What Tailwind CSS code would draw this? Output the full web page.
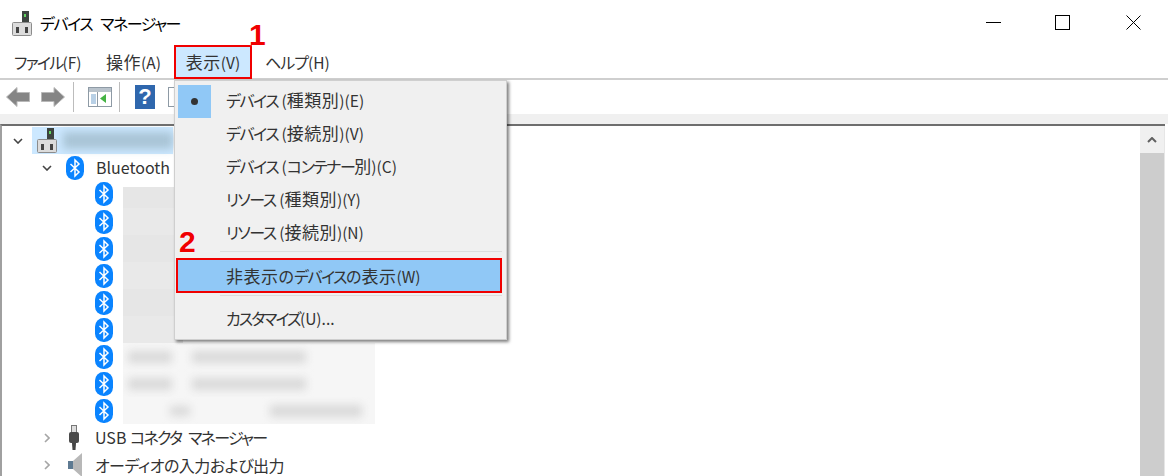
<!DOCTYPE html>
<html lang="ja">
<head>
    <meta charset="UTF-8">
    <title>デバイス マネージャー</title>
    <script src="https://cdn.jsdelivr.net/npm/@tailwindcss/browser@4"></script>
</head>
<body class="bg-white">
    <svg class="hidden">
        <symbol id="bt" viewBox="0 0 18 24">
            <rect width="18" height="24" rx="8.5" fill="#0a84ff"/>
            <path d="M4.5 8 L13 16 L9 20 V4 L13 8 L4.5 16" fill="none" stroke="#fff" stroke-width="1.5"/>
        </symbol>
        <symbol id="pc" viewBox="0 0 20 25">
            <rect x="10" y="0" width="7" height="12" fill="#3d4340"/>
            <rect x="12" y="3" width="2" height="3" fill="#5fd35f"/>
            <rect x="0.5" y="11.5" width="19" height="13" rx="1" fill="#dcdcdc" stroke="#8c8c8c"/>
            <rect x="4" y="16" width="3" height="6" fill="#444"/>
            <rect x="13" y="16" width="3" height="6" fill="#444"/>
        </symbol>
    </svg>

    <div class="relative w-[1168px] h-[476px] overflow-hidden flex flex-col font-['Noto_Sans_CJK_JP',sans-serif] [font-feature-settings:'palt'] text-[#333]">
        <!-- title bar -->
        <div class="h-[46px] flex items-center shrink-0">
            <svg class="w-5 h-[25px] ml-3"><use href="#pc"/></svg>
            <span class="ml-2 text-[16px] text-black tracking-[-1.5px] [word-spacing:6px]">デバイス マネージャー</span>
            <div class="ml-auto flex items-center mr-[27px] mb-[1px]">
                <svg class="w-[15px] h-[15px]" viewBox="0 0 15 15"><path d="M0 7.5H15" stroke="#000" fill="none"/></svg>
                <svg class="w-[15px] h-[15px] ml-[54px]" viewBox="0 0 15 15"><rect x="0.5" y="0.5" width="14" height="14" stroke="#000" fill="none"/></svg>
                <svg class="w-[15px] h-[15px] ml-[56px]" viewBox="0 0 15 15"><path d="M0.5 0.5L14.5 14.5M14.5 0.5L0.5 14.5" stroke="#000" fill="none"/></svg>
            </div>
        </div>

        <!-- menu bar -->
        <div class="h-[34px] shrink-0 flex items-center border-b-2 border-[#cfcfcf] text-[15.5px]">
            <span class="ml-[14px] w-[68px] whitespace-nowrap"><span class="text-[16px] tracking-[-1.75px]">ファイル</span>(F)</span>
            <span class="ml-[24px] w-[55px] whitespace-nowrap"><span class="text-[17px] tracking-[0.5px]">操作</span>(A)</span>
            <span class="ml-[13px] w-[78px] h-[34px] flex items-center justify-center bg-[#cce8ff] border-2 border-[#f00000]"><span><span class="text-[17px] tracking-[0.5px]">表示</span>(V)</span></span>
            <span class="ml-[13px] whitespace-nowrap"><span class="text-[16px] tracking-[-1px]">ヘルプ</span>(H)</span>
        </div>

        <!-- toolbar -->
        <div class="h-[34px] shrink-0 flex items-center">
            <svg class="w-6 h-5 ml-[6px]" viewBox="0 0 24 20"><path d="M0.5 10L11 0.5V5.5H23.5V14.5H11V19.5Z" fill="#858585" stroke="#b8b8b8"/></svg>
            <svg class="w-6 h-5 ml-[11px]" viewBox="0 0 24 20"><path d="M23.5 10L13 0.5V5.5H0.5V14.5H13V19.5Z" fill="#858585" stroke="#b8b8b8"/></svg>
            <div class="w-px h-[30px] bg-[#bcbcbc] ml-2"></div>
            <svg class="w-6 h-5 ml-[14px]" viewBox="0 0 24 20">
                <rect x="0.5" y="0.5" width="23" height="19" fill="#fff" stroke="#8e9aa5"/>
                <rect x="1" y="1" width="22" height="4" fill="#b9c3cc"/>
                <rect x="3" y="7" width="5" height="10" fill="#b8d0e6"/>
                <path d="M9.5 5V19" stroke="#8e9aa5"/>
                <path d="M18 7V16L12 11.5Z" fill="#45b345"/>
            </svg>
            <div class="w-px h-[30px] bg-[#bcbcbc] ml-[7px]"></div>
            <div class="w-5 h-6 ml-[15px] bg-[#2f67ad] text-white text-[22px] leading-6 font-bold text-center font-['Liberation_Sans',sans-serif]">?</div>
            <svg class="w-6 h-5 ml-[13px]" viewBox="0 0 24 20"><rect x="0.5" y="0.5" width="23" height="19" fill="#fff" stroke="#8e9aa5"/></svg>
        </div>

        <div class="h-[10px] shrink-0 bg-[#f0f0f0]"></div>

        <!-- tree + scrollbar -->
        <div class="flex-1 flex border-t-2 border-t-[#6e6e6e] border-l-2 border-l-[#a0a0a0] mr-[3px] min-h-0">
            <div class="flex-1 pt-px overflow-hidden text-[16px]">
                <div class="h-[27px] flex items-center">
                    <svg class="w-[10px] h-[6px] ml-[11px]" viewBox="0 0 10 6"><path d="M1 1L5 5L9 1" fill="none" stroke="#444" stroke-width="1.6"/></svg>
                    <div class="ml-[9px] w-[141px] h-[27px] bg-[#cce8ff] flex items-center shrink-0">
                        <svg class="w-5 h-[25px] ml-[5px] shrink-0"><use href="#pc"/></svg>
                        <div class="ml-[6px] w-[114px] h-[17px] bg-[#a9c4d6] blur-[4px]"></div>
                    </div>
                </div>
                <div class="h-[27px] flex items-center">
                    <svg class="w-[10px] h-[6px] ml-[40px]" viewBox="0 0 10 6"><path d="M1 1L5 5L9 1" fill="none" stroke="#444" stroke-width="1.6"/></svg>
                    <svg class="w-[18px] h-6 ml-[14px]"><use href="#bt"/></svg>
                    <span class="ml-3 pb-[2px]">Bluetooth</span>
                </div>
                <div class="h-[27px] flex items-end pl-[93px]"><svg class="w-[18px] h-6 shrink-0 mb-[2px]"><use href="#bt"/></svg><div class="ml-[10px] w-[60px] h-[21px] bg-[#e6e6e6]"></div></div>
                <div class="h-[27px] flex items-center pl-[93px]"><svg class="w-[18px] h-6 shrink-0"><use href="#bt"/></svg><div class="ml-[10px] w-[60px] h-[27px] bg-[#e9e9e9]"></div></div>
                <div class="h-[27px] flex items-center pl-[93px]"><svg class="w-[18px] h-6 shrink-0"><use href="#bt"/></svg><div class="ml-[10px] w-[60px] h-[27px] bg-[#e6e6e6]"></div></div>
                <div class="h-[27px] flex items-center pl-[93px]"><svg class="w-[18px] h-6 shrink-0"><use href="#bt"/></svg><div class="ml-[10px] w-[60px] h-[27px] bg-[#e9e9e9]"></div></div>
                <div class="h-[27px] flex items-center pl-[93px]"><svg class="w-[18px] h-6 shrink-0"><use href="#bt"/></svg><div class="ml-[10px] w-[60px] h-[27px] bg-[#e6e6e6]"></div></div>
                <div class="h-[27px] flex items-center pl-[93px]"><svg class="w-[18px] h-6 shrink-0"><use href="#bt"/></svg><div class="ml-[10px] w-[60px] h-[27px] bg-[#e9e9e9]"></div></div>
                <div class="h-[27px] flex items-center pl-[93px]">
                    <svg class="w-[18px] h-6 shrink-0"><use href="#bt"/></svg>
                    <div class="ml-[10px] w-[252px] h-[27px] bg-[#f6f6f6] overflow-hidden flex items-center pl-[5px]">
                        <div class="w-[44px] h-[12px] bg-[#d9d9d9] blur-[4px]"></div>
                        <div class="ml-[20px] w-[114px] h-[12px] bg-[#d9d9d9] blur-[4px]"></div>
                    </div>
                </div>
                <div class="h-[27px] flex items-center pl-[93px]">
                    <svg class="w-[18px] h-6 shrink-0"><use href="#bt"/></svg>
                    <div class="ml-[10px] w-[252px] h-[27px] bg-[#f6f6f6] overflow-hidden flex items-center pl-[5px]">
                        <div class="w-[44px] h-[12px] bg-[#d9d9d9] blur-[4px]"></div>
                        <div class="ml-[20px] w-[114px] h-[12px] bg-[#d9d9d9] blur-[4px]"></div>
                    </div>
                </div>
                <div class="h-[27px] flex items-center pl-[93px]">
                    <svg class="w-[18px] h-6 shrink-0"><use href="#bt"/></svg>
                    <div class="ml-[10px] w-[252px] h-[27px] bg-[#f6f6f6] overflow-hidden flex items-center pl-[47px]">
                        <div class="w-[20px] h-[10px] bg-[#d9d9d9] blur-[4px]"></div>
                        <div class="ml-[80px] w-[92px] h-[12px] bg-[#d9d9d9] blur-[4px]"></div>
                    </div>
                </div>
                <div class="h-[27px] flex items-center">
                    <svg class="w-[6px] h-[10px] ml-[42px]" viewBox="0 0 6 10"><path d="M1 1L5 5L1 9" fill="none" stroke="#a6a6a6" stroke-width="1.6"/></svg>
                    <svg class="w-[10px] h-[26px] ml-[19px]" viewBox="0 0 10 26">
                        <rect x="2.5" y="0.5" width="5" height="7" fill="#ddd" stroke="#777"/>
                        <rect x="0" y="7" width="10" height="11" rx="2" fill="#4a4a4a"/>
                        <path d="M3 18H7L6.5 25H3.5Z" fill="#444"/>
                    </svg>
                    <span class="ml-[16px] pb-[2px]">USB <span class="tracking-[-1.75px] [word-spacing:5px]">コネクタ マネージャー</span></span>
                </div>
                <div class="h-[27px] flex items-center">
                    <svg class="w-[6px] h-[10px] ml-[42px]" viewBox="0 0 6 10"><path d="M1 1L5 5L1 9" fill="none" stroke="#a6a6a6" stroke-width="1.6"/></svg>
                    <svg class="w-[14px] h-6 ml-[18px]" viewBox="0 0 14 24"><path d="M0 8H5L14 0V24L5 16H0Z" fill="#b8b8b8"/><path d="M0 8H5V16H0Z" fill="#5e7a92"/></svg>
                    <span class="ml-[13px] tracking-[-0.5px]">オーディオの入力および出力</span>
                </div>
            </div>
            <!-- scrollbar -->
            <div class="w-[25px] shrink-0 flex flex-col bg-[#f0f0f0] border-r border-[#e6e6e6]">
                <div class="h-[27px] flex items-center justify-center">
                    <svg class="w-[10px] h-[6px]" viewBox="0 0 10 6"><path d="M1 5L5 1L9 5" fill="none" stroke="#606060" stroke-width="2"/></svg>
                </div>
                <div class="flex-1 bg-[#cdcdcd]"></div>
            </div>
        </div>

        <!-- view menu -->
        <div class="absolute left-[174px] top-[80px] w-[333px] h-[260px] bg-[#f0f0f0] border border-[#cfcfcf] shadow-[2px_2px_3px_rgba(0,0,0,0.5)] text-[15.5px] pt-1">
            <div class="h-[33px] flex items-center">
                <div class="ml-[3px] w-[33px] h-[33px] bg-[#90c8f6] flex items-center justify-center">
                    <div class="w-[7px] h-[7px] rounded-full bg-[#333]"></div>
                </div>
                <span class="ml-[15px] pb-[4px]"><span class="text-[16px] tracking-[-1.5px]">デバイス</span>&nbsp;(<span class="text-[17px] tracking-[0.5px]">種類別</span>)(E)</span>
            </div>
            <div class="h-[33px] pb-[4px] flex items-center pl-[51px]"><span><span class="text-[16px] tracking-[-1.5px]">デバイス</span>&nbsp;(<span class="text-[17px] tracking-[0.5px]">接続別</span>)(V)</span></div>
            <div class="h-[33px] pb-[4px] flex items-center pl-[51px]"><span><span class="text-[16px] tracking-[-1.5px]">デバイス</span>&nbsp;(<span class="text-[16px] tracking-[-1.5px]">コンテナー</span><span class="text-[17px]">別</span>)(C)</span></div>
            <div class="h-[33px] pb-[4px] flex items-center pl-[51px]"><span><span class="text-[16px] tracking-[-1.5px]">リソース</span>&nbsp;(<span class="text-[17px] tracking-[0.5px]">種類別</span>)(Y)</span></div>
            <div class="h-[33px] pb-[4px] flex items-center pl-[51px]"><span><span class="text-[16px] tracking-[-1.5px]">リソース</span>&nbsp;(<span class="text-[17px] tracking-[0.5px]">接続別</span>)(N)</span></div>
            <div class="h-px bg-[#dcdcdc] ml-[45px] mr-[4px] mt-px"></div>
            <div class="h-[35px] mt-[6px] mx-px flex items-center pl-[48px] bg-[#90c8f6] border-2 border-[#f00000] w-[326px]"><span><span class="text-[17px] tracking-[0.5px]">非表示</span><span class="text-[16px]">の</span><span class="text-[16px] tracking-[-1.5px]">デバイス</span><span class="text-[16px]">の</span><span class="text-[17px] tracking-[0.5px]">表示</span>(W)</span></div>
            <div class="h-px bg-[#dcdcdc] ml-[45px] mr-[4px] mt-[2px]"></div>
            <div class="h-[33px] pb-[4px] mt-[8px] flex items-center pl-[51px]"><span><span class="text-[16px] tracking-[-2px]">カスタマイズ</span>(U)...</span></div>
        </div>

        <!-- step numbers -->
        <span class="absolute left-[249px] top-[19px] text-[30px] leading-8 font-bold text-[#f00000] font-['Liberation_Sans',sans-serif] [text-shadow:0_0_2px_#fff]">1</span>
        <span class="absolute left-[179px] top-[226px] text-[30px] leading-8 font-bold text-[#f00000] font-['Liberation_Sans',sans-serif] [text-shadow:0_0_2px_#fff]">2</span>
    </div>
</body>
</html>
